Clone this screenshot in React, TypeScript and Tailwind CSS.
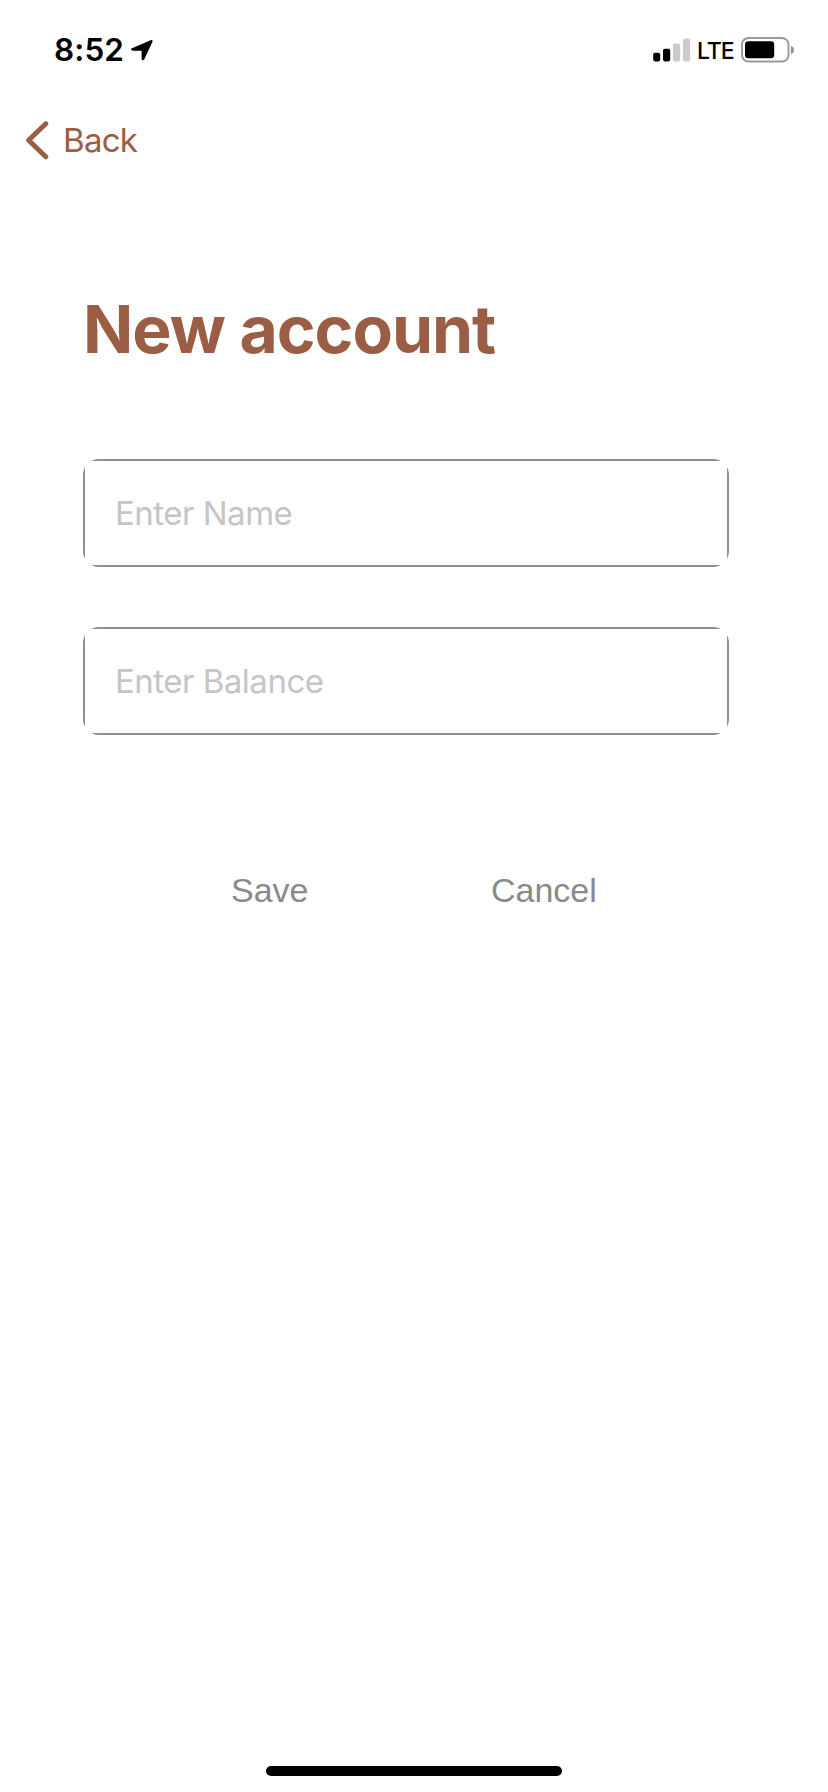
import React from "react";

function StatusBar() {
  return (
    <header className="flex h-[99px] items-center pl-[54px] pr-[33px] text-black">
      <span className="w-[69px] whitespace-nowrap text-[31.5px] font-semibold leading-none tracking-[0.1px]">8:52</span>
      <svg className="ml-[7px] mt-[4px] size-[24px]" viewBox="0 0 24 24" fill="currentColor">
        <path d="M2 8.2 20.6.2C22.1-.3 23 .6 22.4 2L14.3 19.3C13.6 20.7 11.6 20.4 11.6 18.8V10.7H3.1C1 10.7.4 8.9 2 8.2Z" />
      </svg>
      <div className="ml-auto flex items-center">
        <svg className="h-[24px] w-[38px]" viewBox="0 0 38 24">
          <rect x="0.2" y="14.8" width="7" height="8.6" rx="1.8" />
          <rect x="10" y="10.8" width="7.2" height="12.6" rx="1.8" />
          <rect x="20" y="5.6" width="7.2" height="17.8" rx="1.8" fill="#cbcbcb" />
          <rect x="30" y="0.6" width="7.2" height="22.8" rx="1.8" fill="#cbcbcb" />
        </svg>
        <span className="ml-[6px] mt-[3px] w-[38px] whitespace-nowrap text-[23px] font-medium leading-none tracking-[-1px]">
          LTE
        </span>
        <svg className="ml-[6px] h-[26px] w-[54px]" viewBox="0 0 54 26">
          <rect x="1" y="1" width="46.5" height="23.5" rx="6.5" fill="none" stroke="#999" strokeWidth="1.9" />
          <rect x="4" y="4.2" width="29.2" height="17" rx="3.2" />
          <path d="M50 8.7C53.8 9.9 53.8 15.8 50 17Z" fill="#8c8c8c" />
        </svg>
      </div>
    </header>
  );
}

function Field({ label }: { label: string }) {
  return (
    <div className="h-[108px] w-[646px] overflow-hidden rounded-[16px]">
      <input
        type="text"
        aria-label={label}
        placeholder={label}
        className="block size-full border-2 border-[#8e8e93] bg-white pl-[30px] text-[33px] tracking-[-0.5px] outline-none placeholder:text-[#c5c5c7]"
      />
    </div>
  );
}

export default function App() {
  return (
    <div className="flex h-[1792px] w-[828px] flex-col bg-white font-['Inter',sans-serif]">
      <StatusBar />
      <nav className="flex h-[82px] items-center pl-[25px] text-[#9b5e45]">
        <button className="flex items-center">
          <svg className="h-[40px] w-[24px]" viewBox="0 0 24 40" fill="none" stroke="currentColor" strokeWidth="5" strokeLinecap="round" strokeLinejoin="round">
            <path d="M20.8 3.7 3.6 20.2 20.8 36.7" />
          </svg>
          <span className="ml-[14px] whitespace-nowrap text-[33px] leading-none tracking-[-0.7px]">Back</span>
        </button>
      </nav>
      <main className="flex flex-col pl-[83px]">
        <h1 className="mt-[108px] whitespace-nowrap text-[66px] font-bold leading-[80px] tracking-[-1px] text-[#9b5e45]">
          New account
        </h1>
        <form className="mt-[90px] flex flex-col gap-[60px]" onSubmit={(e) => e.preventDefault()}>
          <Field label="Enter Name" />
          <Field label="Enter Balance" />
          <div className="mt-[75px] flex pl-[148px] font-['Liberation_Sans',sans-serif] text-[34px] leading-[40px] text-[#8a8a8a]">
            <button type="submit" className="w-[260px] text-left">Save</button>
            <button type="button">Cancel</button>
          </div>
        </form>
      </main>
      <div className="mx-auto mb-[16px] mt-auto h-[10px] w-[296px] rounded-full bg-black" />
    </div>
  );
}
